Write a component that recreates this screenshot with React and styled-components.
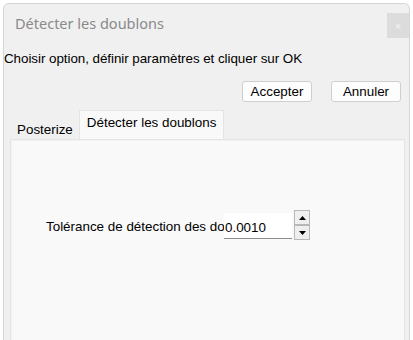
import React from 'react';
import styled, { createGlobalStyle } from 'styled-components';

const Global = createGlobalStyle`
  html, body { margin: 0; padding: 0; background: #ffffff; }
  body { width: 413px; height: 340px; overflow: hidden; }
`;

const Window = styled.div`
  box-sizing: border-box;
  margin: 3px 3px 0 3px;
  height: 337px;
  background: #f0f0f0;
  border: 1px solid #d6d6d6;
  border-bottom: none;
  border-radius: 6px 6px 0 0;
  display: flex;
  flex-direction: column;
  font-family: 'Liberation Sans', Arial, sans-serif;
  color: #000;
`;

const TitleBar = styled.div`
  display: flex;
  align-items: flex-start;
  justify-content: space-between;
  height: 42px;
  padding: 9px 0 0 11px;
  box-sizing: border-box;
`;

const Title = styled.div`
  font-family: 'Noto Sans', 'Open Sans', sans-serif;
  font-size: 14.5px;
  color: #8a8a8a;
  line-height: 20px;
`;

const Close = styled.div`
  width: 22px;
  height: 25px;
  background: #dcdcdc;
  color: #f4f4f4;
  font-size: 11px;
  display: flex;
  align-items: center;
  justify-content: center;
`;

const Instruction = styled.div`
  font-size: 13.4px;
  line-height: 16px;
  margin-top: 5px;
  letter-spacing: -0.05px;
`;

const ButtonRow = styled.div`
  display: flex;
  justify-content: flex-end;
  gap: 19px;
  padding-right: 8px;
  margin-top: 14px;
`;

const Button = styled.button`
  box-sizing: border-box;
  width: 70px;
  height: 21px;
  padding: 0;
  background: #fdfdfd;
  border: 1px solid #cfcfcf;
  border-radius: 3px;
  font-family: 'Liberation Sans', Arial, sans-serif;
  font-size: 13.4px;
  color: #000;
`;

const TabStrip = styled.div`
  display: flex;
  align-items: flex-end;
  margin: 8px 0 0 6px;
  height: 29px;
`;

const Tab = styled.div`
  box-sizing: border-box;
  height: ${p => (p.$active ? '29px' : '24px')};
  padding: ${p => (p.$active ? '4px 7px 0 7px' : '6px 5px 0 6px')};
  background: ${p => (p.$active ? '#f9f9f9' : '#f0f0f0')};
  border: 1px solid ${p => (p.$active ? '#e4e4e4' : 'transparent')};
  border-bottom: none;
  font-size: 13.4px;
  line-height: 16px;
`;

const Panel = styled.div`
  flex: 1;
  margin: 0 4px 0 6px;
  background: #f9f9f9;
  border: 1px solid #e4e4e4;
  border-bottom: none;
  box-shadow: inset 1px 1px 0 #f2f2f2;
  padding: 72px 0 0 35px;
`;

const Field = styled.div`
  display: flex;
  align-items: center;
`;

const Label = styled.div`
  width: 178px;
  overflow: hidden;
  white-space: nowrap;
  font-size: 13.4px;
  line-height: 16px;
  padding-top: 2px;
`;

const Input = styled.div`
  box-sizing: border-box;
  width: 68px;
  height: 26px;
  background: #ffffff;
  border-bottom: 1px solid #8a8a8a;
  font-size: 13.4px;
  line-height: 16px;
  padding: 7px 0 0 1px;
`;

const Spinner = styled.div`
  display: flex;
  flex-direction: column;
  margin-left: 2px;
  margin-top: -2px;
`;

const SpinButton = styled.div`
  box-sizing: border-box;
  width: 16px;
  height: 15px;
  background: #efefef;
  border: 1px solid #b8b8b8;
  display: flex;
  align-items: center;
  justify-content: center;
`;

const Arrow = ({ up }) => (
  <svg width="7" height="4" viewBox="0 0 7 4">
    <polygon points={up ? '0,4 7,4 3.5,0' : '0,0 7,0 3.5,4'} fill="#000" />
  </svg>
);

export default function App() {
  return (
    <>
      <Global />
      <Window>
        <TitleBar>
          <Title>Détecter les doublons</Title>
          <Close>×</Close>
        </TitleBar>
        <Instruction>Choisir option, définir paramètres et cliquer sur OK</Instruction>
        <ButtonRow>
          <Button>Accepter</Button>
          <Button>Annuler</Button>
        </ButtonRow>
        <TabStrip>
          <Tab>Posterize</Tab>
          <Tab $active>Détecter les doublons</Tab>
        </TabStrip>
        <Panel>
          <Field>
            <Label>Tolérance de détection des doublons</Label>
            <Input>0.0010</Input>
            <Spinner>
              <SpinButton><Arrow up /></SpinButton>
              <SpinButton><Arrow /></SpinButton>
            </Spinner>
          </Field>
        </Panel>
      </Window>
    </>
  );
}
